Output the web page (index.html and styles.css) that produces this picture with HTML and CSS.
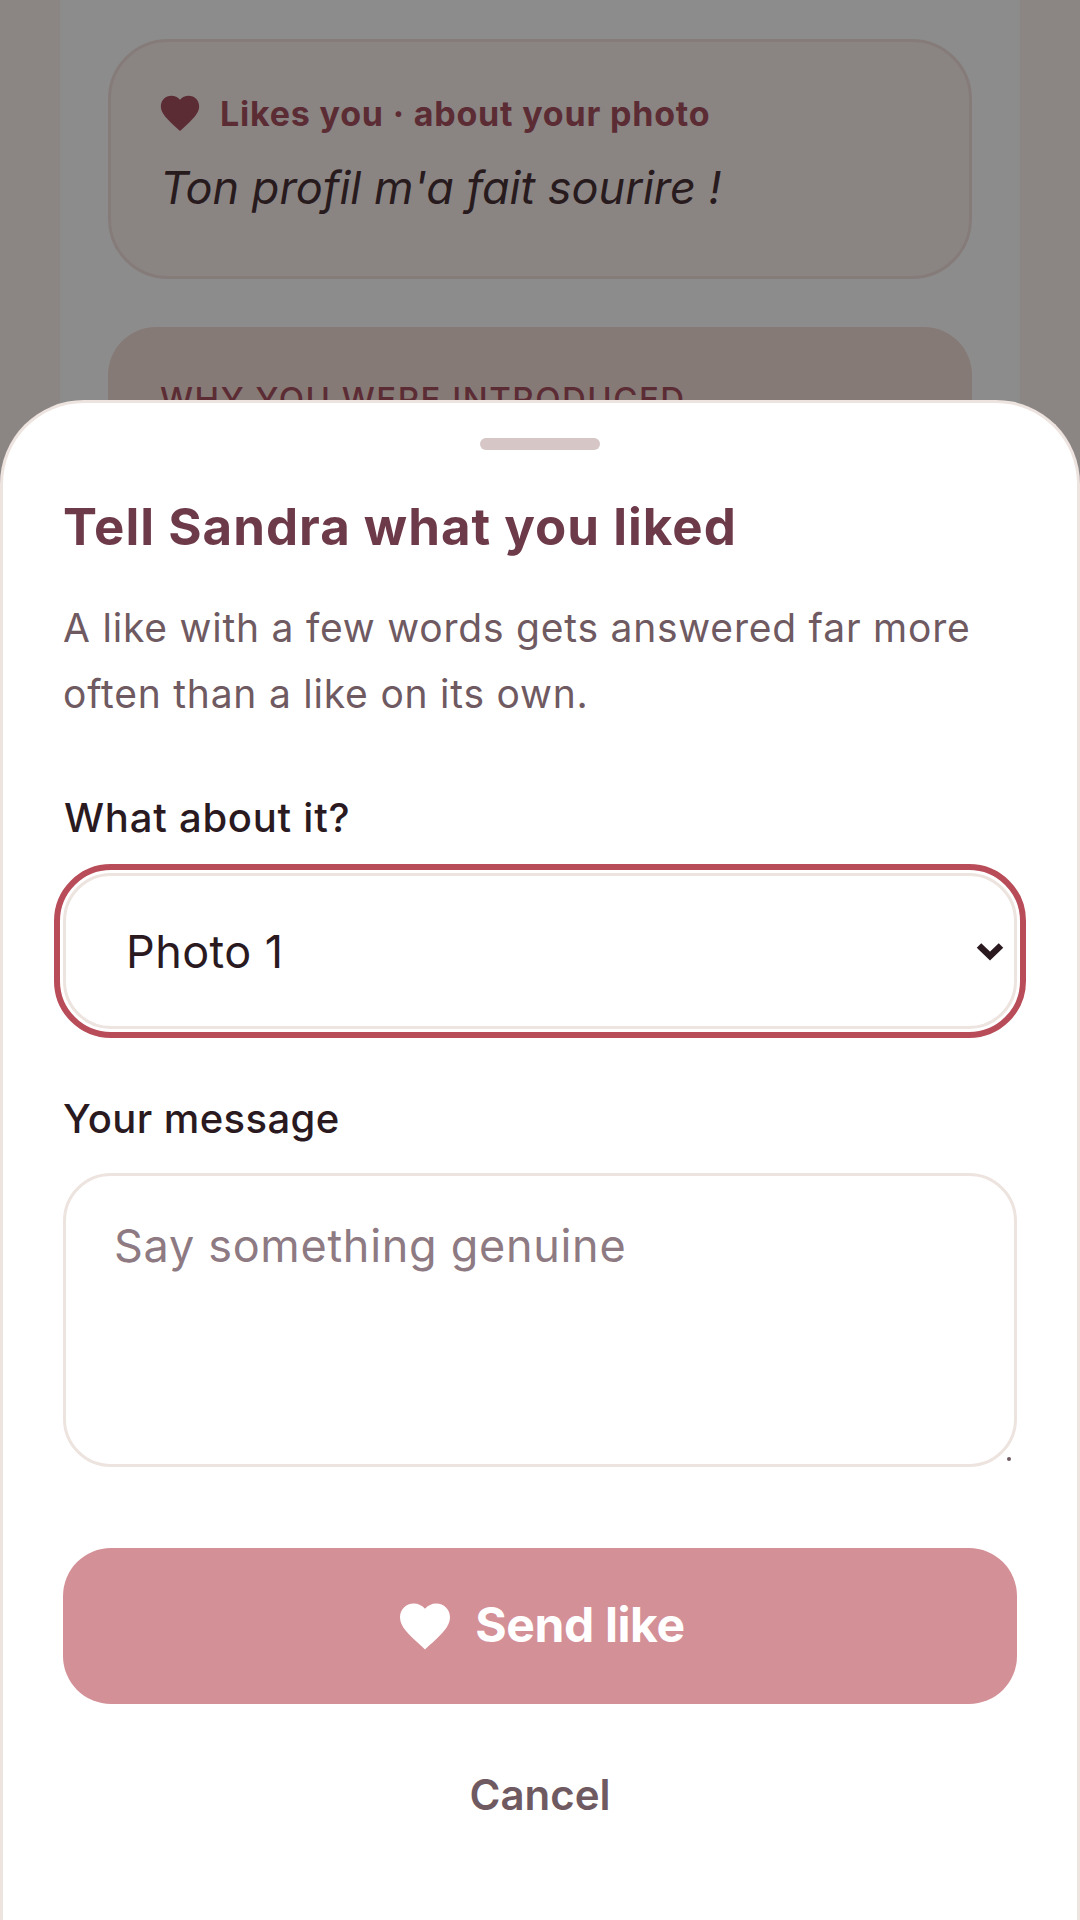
FILE: index.html
```html
<!doctype html>
<html>
  <head>
    <meta charset="utf-8">
    <meta name="viewport" content="width=device-width, initial-scale=1.0"/>
    <title>Send like</title>
    <link rel="stylesheet" href="styles.css">
  </head>
  <body>
    <div class="screen">
      <div class="card card-like">
        <div class="card-label">
          <svg class="heart" viewBox="0 0 24 24"><path d="M12 21.35l-1.45-1.32C5.4 15.36 2 12.28 2 8.5 2 5.42 4.42 3 7.5 3c1.74 0 3.41.81 4.5 2.09C13.09 3.81 14.76 3 16.5 3 19.58 3 22 5.42 22 8.5c0 3.78-3.4 6.86-8.55 11.54L12 21.35z"/></svg>
          <span>Likes you · about your photo</span>
        </div>
        <p class="card-quote">Ton profil m'a fait sourire !</p>
      </div>
      <div class="card card-why">
        <h3>WHY YOU WERE INTRODUCED</h3>
      </div>
    </div>

    <div class="scrim"></div>

    <div class="sheet">
      <div class="handle"></div>
      <h2>Tell Sandra what you liked</h2>
      <p class="hint">A like with a few words gets answered far more often than a like on its own.</p>

      <label class="field-label field-label-first" for="about">What about it?</label>
      <div class="about-wrap">
        <select id="about" class="about">
          <option>Photo 1</option>
        </select>
        <svg class="chevron" viewBox="0 0 30 20"><path d="M4 4.5L15 15L26 4.5"/></svg>
      </div>

      <label class="field-label" for="message">Your message</label>
      <div class="message-wrap">
        <textarea id="message" class="message" placeholder="Say something genuine"></textarea>
        <span class="grip"></span>
      </div>

      <button class="send">
        <svg class="send-heart" viewBox="0 0 24 24"><path d="M12 21.35l-1.45-1.32C5.4 15.36 2 12.28 2 8.5 2 5.42 4.42 3 7.5 3c1.74 0 3.41.81 4.5 2.09C13.09 3.81 14.76 3 16.5 3 19.58 3 22 5.42 22 8.5c0 3.78-3.4 6.86-8.55 11.54L12 21.35z"/></svg>
        <span class="send-text">Send like</span>
      </button>
      <button class="cancel">Cancel</button>
    </div>
  </body>
</html>
```

FILE: styles.css
```css
html, body {
  margin: 0;
  padding: 0;
}

* {
  font-family: Inter, 'Liberation Sans', sans-serif;
  box-sizing: border-box;
}

body {
  height: 1920px;
  overflow: hidden;
  background: #fdf2ee;
}

.screen {
  height: 1920px;
  margin: 0 60px;
  padding: 39px 48px 0;
  background: #fff;
}

.card {
  margin-bottom: 48px;
}

.card-like {
  height: 240px;
  padding: 47px 50px 0;
  border: 3px solid #f3e2df;
  border-radius: 60px;
  background: #fbf0ee;
}

.card-label {
  display: flex;
  align-items: center;
  gap: 17px;
  height: 48px;
  color: #a8505f;
  font-size: 34px;
  font-weight: 700;
  letter-spacing: 0.8px;
}

.heart {
  width: 46px;
  height: 46px;
  margin-left: -4px;
  fill: #a8505f;
}

.card-quote {
  margin: 23px 0 0 -1px;
  color: #4a3238;
  font-size: 45px;
  font-style: italic;
}

.card-why {
  height: 400px;
  padding: 52px 52px 0;
  border-radius: 48px;
  background: #f5ded8;
}

.card-why h3 {
  margin: 0;
  color: #a8505f;
  font-size: 33px;
  font-weight: 500;
  letter-spacing: 1.5px;
}

.scrim {
  position: fixed;
  inset: 0;
  background: rgba(0, 0, 0, 0.45);
}

.sheet {
  position: fixed;
  top: 400px;
  left: 0;
  right: 0;
  bottom: 0;
  padding: 0 60px;
  border: 3px solid #ede3df;
  border-bottom: 0;
  border-radius: 84px 84px 0 0;
  background: #fff;
}

.handle {
  width: 120px;
  height: 12px;
  margin: 35px auto 0;
  border-radius: 6px;
  background: #d6c6c6;
}

.sheet h2 {
  margin: 47px 0 0;
  color: #6d3a4a;
  font-size: 51px;
  font-weight: 700;
  line-height: 60px;
  letter-spacing: 1px;
}

.hint {
  margin: 38px 0 0;
  color: #6f5a62;
  font-size: 39px;
  line-height: 66px;
  letter-spacing: 0.78px;
}

.field-label {
  display: block;
  margin-top: 66px;
  color: #2a1a1f;
  font-size: 40px;
  font-weight: 500;
  line-height: 48px;
  letter-spacing: 0.4px;
}

.field-label-first {
  margin-top: 67px;
  padding-left: 1px;
  letter-spacing: 0.75px;
}

.about-wrap {
  position: relative;
  margin-top: 31px;
}

.about {
  display: block;
  width: 100%;
  height: 156px;
  padding: 0 60px;
  border: 3px solid #ede3df;
  border-radius: 48px;
  outline: 6px solid #b84c58;
  outline-offset: 3px;
  background: #fff;
  color: #2a1a1f;
  font-size: 45px;
  letter-spacing: 0.4px;
  appearance: none;
}

.chevron {
  position: absolute;
  top: 50%;
  right: 12px;
  width: 30px;
  height: 20px;
  transform: translateY(-50%);
  fill: none;
  stroke: #2a1a1f;
  stroke-width: 6.5;
  pointer-events: none;
}

.message-wrap {
  position: relative;
  margin-top: 30px;
}

.message {
  display: block;
  width: 100%;
  height: 294px;
  padding: 43px 48px;
  border: 3px solid #ede3df;
  border-radius: 48px;
  outline: none;
  background: #fff;
  color: #2a1a1f;
  font-size: 45px;
  line-height: 54px;
  letter-spacing: 0.7px;
  resize: none;
}

.message::placeholder {
  color: #8e7a82;
}

.grip {
  position: absolute;
  right: 6px;
  bottom: 6px;
  width: 4px;
  height: 4px;
  border-radius: 2px;
  background: #6f5a62;
}

.send {
  display: flex;
  align-items: center;
  justify-content: center;
  gap: 20px;
  width: 100%;
  height: 156px;
  margin-top: 81px;
  border: 0;
  border-radius: 48px;
  background: #d49097;
  color: #fff;
  font-size: 48px;
  font-weight: 700;
  letter-spacing: -0.4px;
}

.send-heart {
  width: 60px;
  height: 60px;
  fill: #fff;
}

.send-text {
  margin-bottom: 4px;
}

.cancel {
  display: block;
  width: 100%;
  height: 144px;
  margin-top: 18px;
  border: 0;
  background: none;
  color: #6f5a62;
  font-size: 42px;
  font-weight: 600;
}
```
